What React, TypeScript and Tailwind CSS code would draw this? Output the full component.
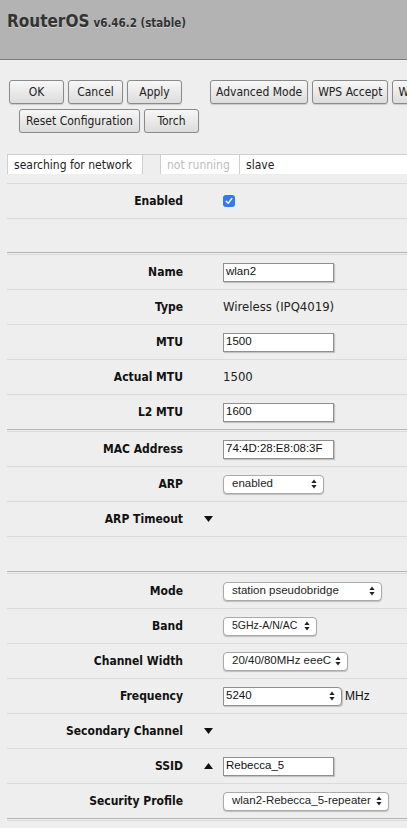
import React from "react";

const UI = { fontFamily: '"DejaVu Sans Condensed", "DejaVu Sans", Verdana, sans-serif' };
const HV = { fontFamily: '"Liberation Sans", Arial, sans-serif' };

function Btn({ children, w }: { children: React.ReactNode; w?: string }) {
  return (
    <div
      className={`h-[24px] ${w ?? "min-w-[55px]"} px-[5px] flex items-center justify-center rounded-[3px] border border-[#8a8a8a] bg-gradient-to-b from-[#f7f7f7] to-[#dcdcdc] shadow-[0_1px_1px_rgba(0,0,0,0.15)] text-[12px] text-[#222] whitespace-nowrap shrink-0`}
    >
      {children}
    </div>
  );
}

function Arrows() {
  return (
    <svg width="6" height="10" viewBox="0 0 6 10" className="shrink-0">
      <path d="M3 0.5 L5.6 4 L0.4 4 Z" fill="#222" />
      <path d="M3 9.5 L5.6 6 L0.4 6 Z" fill="#222" />
    </svg>
  );
}

function Select({ value, w, fs }: { value: string; w: string; fs?: string }) {
  return (
    <div
      className={`${w} h-[19px] flex items-center justify-between pl-[8px] pr-[6px] rounded-[4px] border border-[#a9a9a9] bg-white shadow-[0_1px_1px_rgba(0,0,0,0.2)] ${fs ?? "text-[11.5px]"} text-[#222]`}
      style={HV}
    >
      <span className="whitespace-nowrap">{value}</span>
      <Arrows />
    </div>
  );
}

function Input({ value }: { value: string }) {
  return (
    <div
      className="w-[111px] h-[19px] flex items-center pl-[2px] border border-[#8f8f8f] bg-white shadow-[1px_1px_1px_rgba(0,0,0,0.18)] text-[11.5px] text-[#111] whitespace-nowrap overflow-hidden"
      style={HV}
    >
      {value}
    </div>
  );
}

function Down() {
  return (
    <svg width="9" height="6" viewBox="0 0 9 6">
      <path d="M0 0 H9 L4.5 6 Z" fill="#111" />
    </svg>
  );
}
function Up() {
  return (
    <svg width="9" height="6" viewBox="0 0 9 6">
      <path d="M0 6 H9 L4.5 0 Z" fill="#111" />
    </svg>
  );
}

type Row = {
  label?: string;
  kind: "check" | "input" | "text" | "select" | "combo" | "down" | "upinput" | "empty";
  value?: string;
  w?: string;
  h?: string;
  fs?: string;
};

function FormRow({ r, last }: { r: Row; last: boolean }) {
  let mark: React.ReactNode = null;
  let val: React.ReactNode = null;
  if (r.kind === "check") {
    val = (
      <div className="w-[12px] h-[12px] rounded-[3px] bg-[#3478f6] flex items-center justify-center">
        <svg width="8" height="8" viewBox="0 0 8 8">
          <path d="M1.2 4.3 L3.2 6.2 L6.8 1.6" stroke="white" strokeWidth="1.4" fill="none" strokeLinecap="round" strokeLinejoin="round" />
        </svg>
      </div>
    );
  } else if (r.kind === "input") {
    val = <Input value={r.value!} />;
  } else if (r.kind === "text") {
    val = <span className="text-[13px] text-[#222]">{r.value}</span>;
  } else if (r.kind === "select") {
    val = <Select value={r.value!} w={r.w!} fs={r.fs} />;
  } else if (r.kind === "combo") {
    val = (
      <div className="flex items-center">
        <div
          className="w-[119px] h-[19px] flex items-center justify-between pl-[2px] pr-[6px] rounded-r-[4px] border border-[#8f8f8f] bg-white shadow-[1px_1px_1px_rgba(0,0,0,0.18)] text-[11.5px] text-[#111]"
          style={HV}
        >
          <span>{r.value}</span>
          <Arrows />
        </div>
        <span className="ml-[3px] text-[12px] text-[#111]" style={HV}>
          MHz
        </span>
      </div>
    );
  } else if (r.kind === "down") {
    mark = <Down />;
  } else if (r.kind === "upinput") {
    mark = <Up />;
    val = <Input value={r.value!} />;
  }
  return (
    <div
      className={`flex items-center ${r.h ?? "h-[35px]"} border-b ${last ? "border-[#b5b5b5]" : "border-[#dadada]"}`}
    >
      <div className="w-[176px] text-right text-[12px] font-bold text-[#111] whitespace-nowrap">{r.label}</div>
      <div className="w-[40px] flex items-center pl-[21px]">{mark}</div>
      {val}
    </div>
  );
}

function Section({ rows, first }: { rows: Row[]; first?: boolean }) {
  return (
    <div className={`${first ? "" : "mt-px"} border-t border-[#d9d9d9]`}>
      {rows.map((r, i) => (
        <FormRow key={i} r={r} last={i === rows.length - 1} />
      ))}
    </div>
  );
}

export default function App() {
  const sections: Row[][] = [
    [
      { label: "Enabled", kind: "check" },
      { kind: "empty", h: "h-[34px]" },
    ],
    [
      { label: "Name", kind: "input", value: "wlan2" },
      { label: "Type", kind: "text", value: "Wireless (IPQ4019)" },
      { label: "MTU", kind: "input", value: "1500" },
      { label: "Actual MTU", kind: "text", value: "1500" },
      { label: "L2 MTU", kind: "input", value: "1600" },
    ],
    [
      { label: "MAC Address", kind: "input", value: "74:4D:28:E8:08:3F" },
      { label: "ARP", kind: "select", value: "enabled", w: "w-[101px]" },
      { label: "ARP Timeout", kind: "down" },
      { kind: "empty" },
    ],
    [
      { label: "Mode", kind: "select", value: "station pseudobridge", w: "w-[159px]" },
      { label: "Band", kind: "select", value: "5GHz-A/N/AC", w: "w-[94px]", fs: "text-[10.5px]" },
      { label: "Channel Width", kind: "select", value: "20/40/80MHz eeeC", w: "w-[125px]" },
      { label: "Frequency", kind: "combo", value: "5240" },
      { label: "Secondary Channel", kind: "down" },
      { label: "SSID", kind: "upinput", value: "Rebecca_5" },
      { label: "Security Profile", kind: "select", value: "wlan2-Rebecca_5-repeater", w: "w-[166px]" },
    ],
    [{ kind: "empty" }, { kind: "empty" }],
  ];

  return (
    <div className="w-[407px] h-[828px] overflow-hidden bg-[#eeeeee]" style={UI}>
      <div className="h-[60px] bg-[#b3b3b3] border-b border-[#7d7d7d] pl-[7px] pt-[9px]">
        <div className="flex items-baseline text-[#333] [text-shadow:0_1px_0_#d0d0d0]">
          <span className="text-[17px] font-bold">RouterOS</span>
          <span className="ml-[4px] text-[11.5px] font-bold">v6.46.2 (stable)</span>
        </div>
      </div>

      <div className="pt-[20px] overflow-hidden">
        <div className="flex pl-[9px] gap-[4px] whitespace-nowrap">
          <Btn>OK</Btn>
          <Btn>Cancel</Btn>
          <Btn>Apply</Btn>
          <div className="w-[20px] shrink-0" />
          <Btn>Advanced Mode</Btn>
          <Btn>WPS Accept</Btn>
          <Btn>WPS Client</Btn>
        </div>
        <div className="flex pl-[19px] gap-[4px] mt-[5px]">
          <Btn w="w-[121px]">Reset Configuration</Btn>
          <Btn>Torch</Btn>
        </div>
      </div>

      <div className="mt-[21px] ml-[7px] flex h-[20px] text-[12px] border-t border-[#cfcfcf]">
        <div className="w-[136px] bg-white border-x border-[#cfcfcf] pl-[6px] flex items-center whitespace-nowrap text-[#222]">
          searching for network
        </div>
        <div className="w-[18px] border-r border-[#cfcfcf]" />
        <div className="w-[79px] bg-white border-r border-[#cfcfcf] pl-[6px] flex items-center text-[#bdbdbd] whitespace-nowrap">
          not running
        </div>
        <div className="flex-1 bg-white pl-[6px] flex items-center text-[#222]">slave</div>
      </div>

      <div className="ml-[7px] mt-[9px]">
        {sections.map((s, i) => (
          <Section key={i} rows={s} first={i === 0} />
        ))}
      </div>
    </div>
  );
}
